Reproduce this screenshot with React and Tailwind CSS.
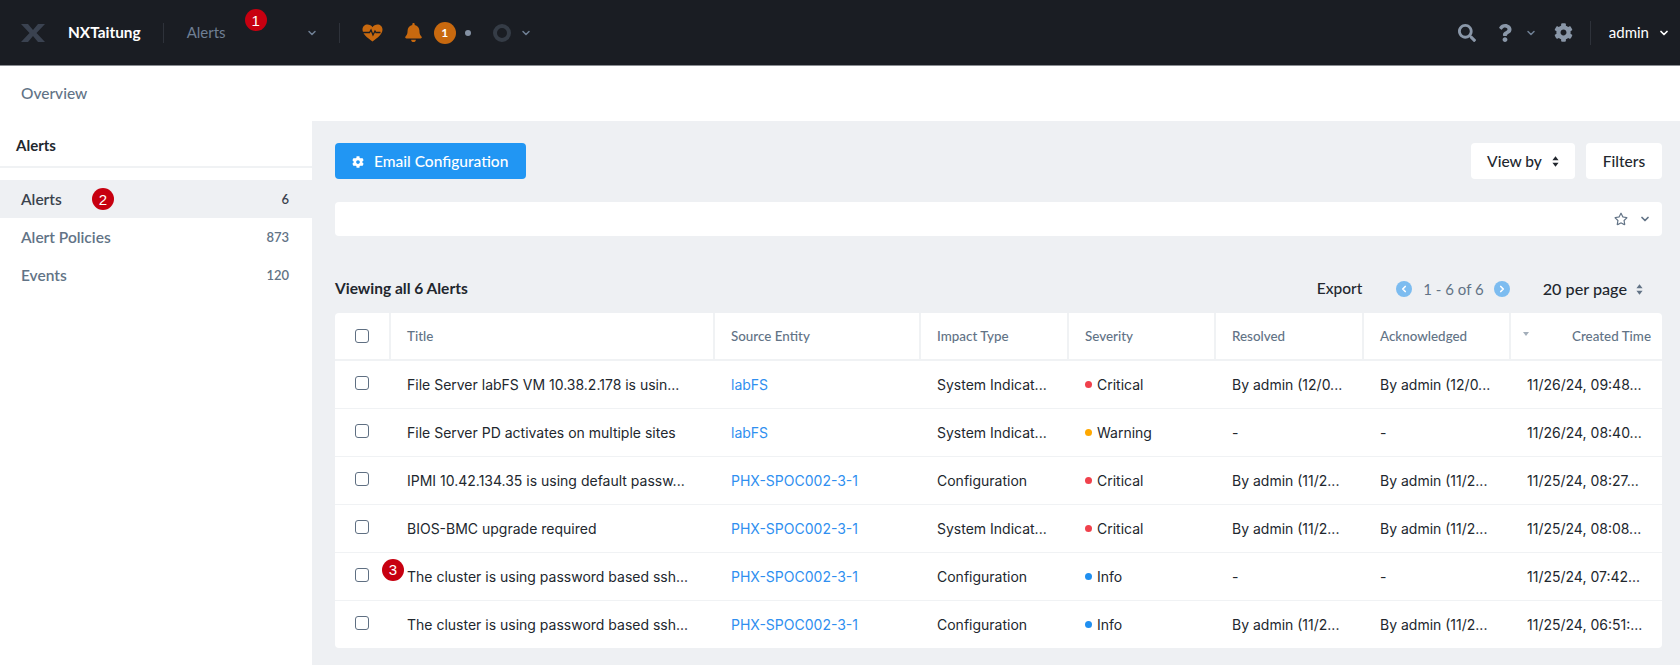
import React from "react";
import { FaBell, FaSearch, FaQuestion, FaCog, FaRegStar } from "react-icons/fa";
import { ChevronDown, ChevronLeft, ChevronRight } from "lucide-react";

const rows = [
  ["File Server labFS VM 10.38.2.178 is usin...", "labFS", "System Indicat...", "Critical", "By admin (12/0...", "By admin (12/0...", "11/26/24, 09:48..."],
  ["File Server PD activates on multiple sites", "labFS", "System Indicat...", "Warning", "-", "-", "11/26/24, 08:40..."],
  ["IPMI 10.42.134.35 is using default passw...", "PHX-SPOC002-3-1", "Configuration", "Critical", "By admin (11/2...", "By admin (11/2...", "11/25/24, 08:27..."],
  ["BIOS-BMC upgrade required", "PHX-SPOC002-3-1", "System Indicat...", "Critical", "By admin (11/2...", "By admin (11/2...", "11/25/24, 08:08..."],
  ["The cluster is using password based ssh...", "PHX-SPOC002-3-1", "Configuration", "Info", "-", "-", "11/25/24, 07:42..."],
  ["The cluster is using password based ssh...", "PHX-SPOC002-3-1", "Configuration", "Info", "By admin (11/2...", "By admin (11/2...", "11/25/24, 06:51:..."],
];

const dotClass = { Critical: "bg-[#f0414c]", Warning: "bg-[#ffa800]", Info: "bg-[#1f8ff0]" };
const gridCols = "grid grid-cols-[54px_324px_206px_148px_147px_148px_147px_153px]";

function Step({ n, className }) {
  return (
    <span className={`absolute flex h-[22px] w-[22px] items-center justify-center rounded-full bg-[#c70010] font-['Liberation_Sans',sans-serif] text-[15px] font-normal leading-none text-white ${className}`}>
      {n}
    </span>
  );
}

function Box() {
  return <span className="block h-[14px] w-[14px] rounded-[3px] border-[1.5px] border-[#5f6f82] bg-white" />;
}

function UpDown({ className = "" }) {
  return (
    <svg width="7" height="11" viewBox="0 0 6 10" className={className}>
      <path d="M3 0.2 L5.8 3.8 H0.2 Z M3 9.8 L5.8 6.2 H0.2 Z" fill="currentColor" />
    </svg>
  );
}

function Logo() {
  return (
    <svg width="24" height="18" viewBox="0 0 24 18">
      <path d="M0 0H7L12 6L17 0H24L15.5 9L24 18H17L12 12L7 18H0L8.5 9Z" fill="#3a4250" />
    </svg>
  );
}

function Heart() {
  return (
    <svg width="21" height="18" viewBox="0 0 21 18" className="ml-[22px]">
      <path d="M10.5 17.5 C5 13.5 0.5 10 0.5 5.5 C0.5 2.5 2.8 0.5 5.5 0.5 C7.5 0.5 9.5 1.5 10.5 3.2 C11.5 1.5 13.5 0.5 15.5 0.5 C18.2 0.5 20.5 2.5 20.5 5.5 C20.5 10 16 13.5 10.5 17.5 Z" fill="#c8690f" />
      <path d="M0 8.5 H7.5 L9 6 L11 11 L13 7 L14 8.5 H18.5" fill="none" stroke="#1a1d23" strokeWidth="1.3" />
    </svg>
  );
}

function Header() {
  return (
    <header className="flex h-[66px] shrink-0 items-center border-b border-[#8a8d92] bg-[#1a1d23] pl-[21px] pr-[10px]">
      <Logo />
      <span className="ml-[23px] text-[15.4px] font-bold text-white">NXTaitung</span>
      <span className="ml-[22px] h-[20px] w-px bg-[#2e323a]" />
      <span className="relative ml-[23px] w-[119px] text-[15px] text-[#6f7f94]">
        Alerts
        <Step n="1" className="left-[58px] top-[-12px]" />
      </span>
      <ChevronDown size={12} strokeWidth={3} className="text-[#6f7f94]" />
      <span className="ml-[21px] h-[20px] w-px bg-[#2e323a]" />
      <Heart />
      <FaBell size={19} className="ml-[21px] text-[#c8690f]" />
      <span className="ml-[11px] flex h-[22px] w-[22px] items-center justify-center rounded-full bg-[#c8690f] text-[12px] font-bold text-white">1</span>
      <span className="ml-[9px] h-[6px] w-[6px] rounded-full bg-[#8491a3]" />
      <span className="ml-[22px] h-[18px] w-[18px] rounded-full border-[4px] border-[#353c46]" />
      <ChevronDown size={12} strokeWidth={3} className="ml-[9px] text-[#6f7f94]" />
      <FaSearch size={18} className="ml-auto text-[#8a97a8]" />
      <FaQuestion size={18} className="ml-[20px] text-[#8a97a8]" />
      <ChevronDown size={12} strokeWidth={3} className="ml-[11px] text-[#6f7f94]" />
      <FaCog size={19} className="ml-[17px] text-[#8a97a8]" />
      <span className="ml-[17px] h-[24px] w-px bg-[#2e323a]" />
      <span className="ml-[18px] text-[15px] text-white">admin</span>
      <ChevronDown size={12} strokeWidth={3.5} className="ml-[9px] text-white" />
    </header>
  );
}

function Sidebar() {
  const items = [["Alerts", "6", true], ["Alert Policies", "873"], ["Events", "120"]];
  return (
    <aside className="w-[312px] shrink-0 bg-white">
      <div className="flex h-[47px] items-center border-b-2 border-[#f0f2f4] pl-4 pt-[3px] text-[15px] font-bold text-[#22272e]">Alerts</div>
      <div className="pt-[12px]">
        {items.map(([label, count, active]) => (
          <div key={label} className={`relative flex h-[38px] items-center justify-between pl-[21px] pr-[23px] pt-px font-semibold ${active ? "bg-[#eef0f3] text-[#3a424d]" : "text-[#627386]"}`}>
            <span className="text-[15.5px]">{label}</span>
            <span className="text-[13px]">{count}</span>
            {active && <Step n="2" className="left-[92px] top-[8px]" />}
          </div>
        ))}
      </div>
    </aside>
  );
}

function Table() {
  const heads = ["Title", "Source Entity", "Impact Type", "Severity", "Resolved", "Acknowledged"];
  return (
    <div className="overflow-hidden rounded-[4px] bg-white">
      <div className={`${gridCols} h-[48px] border-b-2 border-[#f0f2f4] text-[13.4px] font-medium text-[#627386]`}>
        <div className="flex items-center justify-center"><Box /></div>
        {heads.map((h) => (
          <div key={h} className="flex items-center border-l-2 border-[#f0f2f4] pl-[16px]">{h}</div>
        ))}
        <div className="relative flex items-center justify-end border-l-2 border-[#f0f2f4] pr-[11px]">
          <svg width="6" height="4" viewBox="0 0 6 4" className="absolute left-[12px] top-[19px] text-[#a3aeba]"><path d="M0 0 H6 L3 4 Z" fill="currentColor" /></svg>
          Created Time
        </div>
      </div>
      {rows.map((r, i) => (
        <div key={i} className={`${gridCols} items-center font-['Inter',sans-serif] text-[14px] text-[#22272e] ${i < 5 ? "h-[48px] border-b border-[#f0f2f4]" : "h-[47px]"}`}>
          <div className="relative flex -translate-y-[2px] items-center justify-center">
            <Box />
            {i === 4 && <Step n="3" className="left-[47px] top-[-9px]" />}
          </div>
          <div className="whitespace-nowrap pl-[18px]">{r[0]}</div>
          <div className="pl-[18px] text-[#2f8ff0]">{r[1]}</div>
          <div className="whitespace-nowrap pl-[18px]">{r[2]}</div>
          <div className="flex items-center gap-[5px] pl-[18px]">
            <span className={`h-[7px] w-[7px] rounded-full ${dotClass[r[3]]}`} />
            {r[3]}
          </div>
          <div className="whitespace-nowrap pl-[18px]">{r[4]}</div>
          <div className="whitespace-nowrap pl-[18px]">{r[5]}</div>
          <div className="whitespace-nowrap pl-[18px]">{r[6]}</div>
        </div>
      ))}
    </div>
  );
}

function Main() {
  return (
    <main className="flex-1 bg-[#eef0f3] pl-[23px] pr-[18px] pt-[22px]">
      <div className="flex items-center justify-between">
        <button className="flex h-[36px] w-[191px] items-center rounded-[4px] bg-[#2196f3] pl-[17px] pt-px text-[15.5px] font-medium text-white">
          <FaCog size={12} />
          <span className="ml-[10px]">Email Configuration</span>
        </button>
        <div className="flex gap-[11px] text-[15.5px] font-medium text-[#22272e]">
          <button className="flex h-[36px] w-[104px] items-center justify-center gap-[10px] rounded-[4px] bg-white pt-px">
            View by <UpDown />
          </button>
          <button className="h-[36px] w-[76px] rounded-[4px] bg-white pt-px">Filters</button>
        </div>
      </div>
      <div className="mt-[23px] flex h-[34px] items-center justify-end rounded-[4px] bg-white pr-[11px] text-[#627386]">
        <FaRegStar size={14} />
        <ChevronDown size={12} strokeWidth={3.5} className="ml-[11px]" />
      </div>
      <div className="mt-[36px] flex h-[34px] items-center text-[15.5px] text-[#22272e]">
        <span className="font-bold">Viewing all 6 Alerts</span>
        <span className="ml-auto font-medium">Export</span>
        <span className="ml-[34px] flex h-[16px] w-[16px] items-center justify-center rounded-full bg-[#7cbcf0] text-white"><ChevronLeft size={10} strokeWidth={4} /></span>
        <span className="ml-[11px] text-[15px] text-[#627386]">1 - 6 of 6</span>
        <span className="ml-[10px] flex h-[16px] w-[16px] items-center justify-center rounded-full bg-[#7cbcf0] text-white"><ChevronRight size={10} strokeWidth={4} /></span>
        <span className="ml-[33px] text-[16.2px] font-medium">20 per page</span>
        <UpDown className="ml-[9px] mr-[19px] text-[#627386]" />
      </div>
      <div className="mt-[7px]"><Table /></div>
    </main>
  );
}

export default function App() {
  return (
    <div className="flex h-[665px] flex-col overflow-hidden bg-white font-['Lato',sans-serif]">
      <Header />
      <div className="flex h-[55px] shrink-0 items-center pl-[21px] text-[15.5px] font-medium text-[#627386]">Overview</div>
      <div className="flex flex-1">
        <Sidebar />
        <Main />
      </div>
    </div>
  );
}
